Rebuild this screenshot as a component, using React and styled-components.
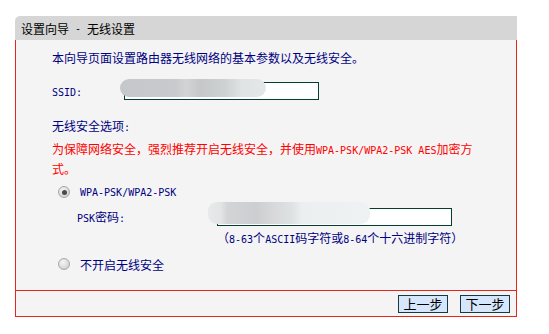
import React from "react";
import styled, { createGlobalStyle } from "styled-components";

const GlobalStyle = createGlobalStyle`
  body {
    margin: 0;
    background: #ffffff;
    font-family: "Noto Sans CJK SC", "Noto Sans", sans-serif;
  }
`;

const Page = styled.div`
  padding: 16px 0 0 15px;
`;

const Wizard = styled.div`
  width: 502px;
`;

const TitleBar = styled.div`
  height: 24px;
  background: #d6d6d6;
  border-top-left-radius: 5px;
  padding-left: 6px;
  display: flex;
  align-items: center;
  font-size: 12px;
  color: #000;
  white-space: pre;
`;

const Panel = styled.div`
  box-sizing: border-box;
  border: 1px solid #e3261d;
  border-top: none;
  background: #f4f4f4;
`;

const Content = styled.div`
  box-sizing: border-box;
  height: 250px;
  padding: 10px 0 0 36px;
  color: #000080;
  font-size: 12px;
`;

// latin runs look like a 6px monospace in the original
const M = styled.span`
  font-family: "DejaVu Sans Mono", "Liberation Mono", monospace;
  font-size: 10px;
  white-space: pre;
`;

const Line = styled.div`
  line-height: 16px;
  margin-top: ${(p) => p.$top || 0}px;
  padding-left: ${(p) => p.$indent || 0}px;
  white-space: nowrap;
`;

const Warning = styled.div`
  margin-top: 4px;
  line-height: 18px;
  color: #ff0000;
  white-space: nowrap;
`;

const FieldRow = styled.div`
  display: flex;
  align-items: center;
  height: 18px;
  margin-top: ${(p) => p.$top}px;
  padding-left: ${(p) => p.$indent || 0}px;
`;

const Label = styled.div`
  width: ${(p) => p.$width}px;
  flex: none;
`;

const InputWrap = styled.div`
  position: relative;
  width: ${(p) => p.$width}px;
  height: 18px;
`;

const TextInput = styled.input`
  box-sizing: border-box;
  width: 100%;
  height: 18px;
  margin: 0;
  padding: 0 3px;
  border: 1px solid #063c32;
  background: #ffffff;
  outline: none;
`;

// blurred redaction blob that lies over the field
const Blur = styled.div`
  position: absolute;
  left: ${(p) => p.$left}px;
  top: ${(p) => p.$top}px;
  width: ${(p) => p.$width}px;
  height: ${(p) => p.$height}px;
  border-radius: 9px;
  background: ${(p) => p.$bg};
  filter: blur(0.6px);
  pointer-events: none;
`;

const RadioRow = styled.label`
  display: flex;
  align-items: center;
  gap: 10px;
  height: 16px;
  margin-top: ${(p) => p.$top}px;
  padding-left: 6px;
  white-space: nowrap;
`;

const Radio = styled.span`
  box-sizing: border-box;
  width: 12px;
  height: 12px;
  flex: none;
  border-radius: 50%;
  border: 1px solid #a8a8a8;
  background: radial-gradient(circle at 40% 35%, #f6f6f6 0%, #dcdcdc 55%, #c4c4c4 100%);
  display: flex;
  align-items: center;
  justify-content: center;

  &::after {
    content: "";
    width: 5px;
    height: 5px;
    border-radius: 50%;
    background: ${(p) => (p.$checked ? "#4a4a4a" : "transparent")};
  }
`;

const Footer = styled.div`
  height: 25px;
  border-top: 1px solid #e3261d;
  display: flex;
  align-items: center;
  justify-content: flex-end;
  gap: 12px;
  padding-right: 6px;
`;

const StepButton = styled.button`
  box-sizing: border-box;
  width: 50px;
  height: 18px;
  margin: 0;
  padding: 0;
  border: 1px solid #143c3c;
  background: #d6e6fd;
  color: #000;
  font-family: "Noto Sans CJK SC", sans-serif;
  font-size: 13px;
  line-height: 16px;
`;

export default function App() {
  return (
    <>
      <GlobalStyle />
      <Page>
        <Wizard>
          <TitleBar>
            设置向导<M>{" - "}</M>无线设置
          </TitleBar>
          <Panel>
            <Content>
              <Line>本向导页面设置路由器无线网络的基本参数以及无线安全。</Line>

              <FieldRow $top={15}>
                <Label $width={72}>
                  <M>SSID:</M>
                </Label>
                <InputWrap $width={195}>
                  <TextInput type="text" defaultValue="" />
                  <Blur
                    $left={-4}
                    $top={-2}
                    $width={146}
                    $height={18}
                    $bg="linear-gradient(90deg, #c6c7cb 0%, #c9cacd 38%, #d2d4d5 45%, #c5c7c9 55%, #cfd2d3 72%, #e0e4e4 84%, #e4e7e7 100%)"
                  />
                </InputWrap>
              </FieldRow>

              <Line $top={19}>
                无线安全选项<M>:</M>
              </Line>
              <Warning>
                <span>为保障网络安全，强烈推荐开启无线安全，并使用</span>
                <M>WPA-PSK/WPA2-PSK AES</M>
                <span>加密方</span>
                <br />
                <span>式。</span>
              </Warning>

              <RadioRow $top={6}>
                <Radio $checked />
                <M>WPA-PSK/WPA2-PSK</M>
              </RadioRow>

              <FieldRow $top={7} $indent={25}>
                <Label $width={140}>
                  <M>PSK</M>密码<M>:</M>
                </Label>
                <InputWrap $width={235}>
                  <TextInput type="text" defaultValue="" />
                  <Blur
                    $left={-9}
                    $top={-5}
                    $width={162}
                    $height={22}
                    $bg="linear-gradient(90deg, #e7e9ea 0%, #e2e4e5 8%, #d3d4d6 12%, #cdced1 30%, #d6d8da 40%, #dfe2e3 52%, #eceff0 58%, #eff2f3 100%)"
                  />
                </InputWrap>
              </FieldRow>

              <Line $top={5} $indent={165}>
                （<M>8-63</M>个<M>ASCII</M>码字符或<M>8-64</M>个十六进制字符）
              </Line>

              <RadioRow $top={8}>
                <Radio />
                不开启无线安全
              </RadioRow>
            </Content>
            <Footer>
              <StepButton>上一步</StepButton>
              <StepButton>下一步</StepButton>
            </Footer>
          </Panel>
        </Wizard>
      </Page>
    </>
  );
}
